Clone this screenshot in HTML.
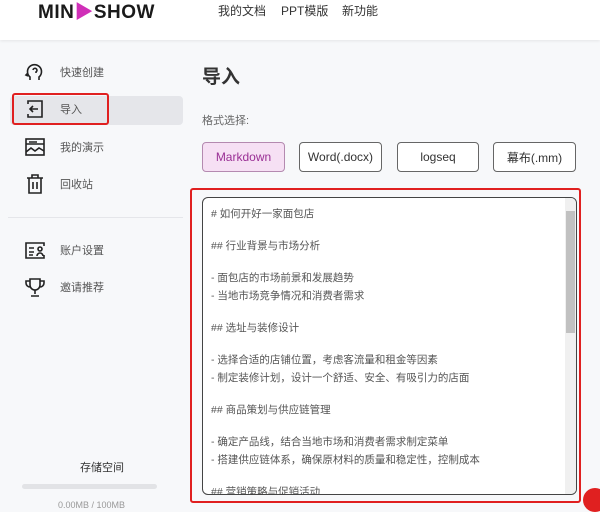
<!DOCTYPE html>
<html><head><meta charset="utf-8"><style>
*{margin:0;padding:0;box-sizing:border-box}
body{width:600px;height:506px;overflow:hidden;background:#f7f8fa;font-family:"Liberation Sans","Noto Sans CJK SC",sans-serif;position:relative;color:#333}
.hdr{position:absolute;left:0;top:0;width:600px;height:40px;background:#fff;box-shadow:0 1px 3px rgba(0,0,0,.08)}
.logo{position:absolute;left:38px;top:-3px;font-weight:bold;font-size:19px;letter-spacing:0.5px;color:#1a1a1a}
.nav{position:absolute;top:2px;font-size:12px;color:#333}
.item{position:absolute;left:24px;font-size:11px;color:#555;display:flex;align-items:center}
.item svg{width:22px;height:22px;margin-right:14px}
.btn{position:absolute;top:142px;height:30px;border:1px solid #666;border-radius:4px;background:#fff;font-size:12px;display:flex;align-items:center;justify-content:center;color:#333}
.ta{position:absolute;left:202px;top:197px;width:375px;height:298px;background:#fff;border:1.5px solid #444;border-radius:6px;overflow:hidden}
.ta p{position:absolute;left:8px;font-size:10.5px;color:#555;white-space:nowrap}
</style></head><body>
<div class="hdr">
<div class="logo">MIN<span style="color:#d02fb8">▶</span>SHOW</div>
<div class="nav" style="left:218px">我的文档</div>
<div class="nav" style="left:281px">PPT模版</div>
<div class="nav" style="left:342px">新功能</div>
</div>
<div style="position:absolute;left:10px;top:96px;width:173px;height:29px;background:#e5e6ea;border-radius:4px"></div>
<div style="position:absolute;left:12px;top:93px;width:97px;height:32px;border:2.5px solid #e02020;border-radius:3px"></div>
<div class="item" style="top:61px"><svg viewBox="0 0 22 22" fill="none" stroke="#222" stroke-width="1.6"><path d="M6 19v-3a7 7 0 1 1 9 0v3M4 12l-2 2 2 1M9 9a2 2 0 1 1 3 2v1"/></svg>快速创建</div>
<div class="item" style="top:98px"><svg viewBox="0 0 22 22" fill="none" stroke="#222" stroke-width="1.6"><path d="M4 6V3h14v16H4v-3M14 11H6M9 8l-3 3 3 3"/></svg>导入</div>
<div class="item" style="top:136px"><svg viewBox="0 0 22 22" fill="none" stroke="#222" stroke-width="1.6"><rect x="2" y="3" width="18" height="16"/><path d="M2 8h18M5 6h8M2 16l5-4 4 3 4-3 5 3"/></svg>我的演示</div>
<div class="item" style="top:173px"><svg viewBox="0 0 22 22" fill="none" stroke="#222" stroke-width="1.6"><path d="M3 5h16M8 5V2h6v3M5 5v15h12V5M9 9v7M13 9v7"/></svg>回收站</div>
<div style="position:absolute;left:8px;top:217px;width:175px;height:1px;background:#e5e6ea"></div>
<div class="item" style="top:239px"><svg viewBox="0 0 22 22" fill="none" stroke="#222" stroke-width="1.6"><path d="M20 7V4H2v15h18v-3M5 9h5M5 13h5M5 16h4M13 17a3 3 0 0 1 6 0M16 8a2 2 0 1 1 0 4 2 2 0 0 1 0-4"/></svg>账户设置</div>
<div class="item" style="top:276px"><svg viewBox="0 0 22 22" fill="none" stroke="#222" stroke-width="1.6"><path d="M6 3h10v6a5 5 0 0 1-10 0zM6 5H2v2a4 4 0 0 0 4 4M16 5h4v2a4 4 0 0 1-4 4M11 14v4M7 20h8"/></svg>邀请推荐</div>
<div style="position:absolute;left:80px;top:459px;font-size:11px;color:#333">存储空间</div>
<div style="position:absolute;left:22px;top:484px;width:135px;height:5px;background:#e2e3e6;border-radius:3px"></div>
<div style="position:absolute;left:58px;top:500px;font-size:9px;color:#999">0.00MB / 100MB</div>
<div style="position:absolute;left:202px;top:62px;font-size:19px;font-weight:bold;color:#333">导入</div>
<div style="position:absolute;left:202px;top:112px;font-size:11px;color:#666">格式选择:</div>
<div class="btn" style="left:202px;width:83px;background:#f6e0f4;border-color:#b48ab0;color:#9a2f95">Markdown</div>
<div class="btn" style="left:299px;width:83px">Word(.docx)</div>
<div class="btn" style="left:397px;width:82px">logseq</div>
<div class="btn" style="left:493px;width:83px">幕布(.mm)</div>
<div class="ta">
<p style="top:8px"># 如何开好一家面包店</p>
<p style="top:40px">## 行业背景与市场分析</p>
<p style="top:72px">- 面包店的市场前景和发展趋势</p>
<p style="top:90px">- 当地市场竞争情况和消费者需求</p>
<p style="top:122px">## 选址与装修设计</p>
<p style="top:154px">- 选择合适的店铺位置，考虑客流量和租金等因素</p>
<p style="top:172px">- 制定装修计划，设计一个舒适、安全、有吸引力的店面</p>
<p style="top:204px">## 商品策划与供应链管理</p>
<p style="top:236px">- 确定产品线，结合当地市场和消费者需求制定菜单</p>
<p style="top:254px">- 搭建供应链体系，确保原材料的质量和稳定性，控制成本</p>
<p style="top:286px">## 营销策略与促销活动</p>
<div style="position:absolute;right:0;top:0;width:11px;height:100%;background:#f0f0f0"></div>
<div style="position:absolute;right:1px;top:13px;width:9px;height:122px;background:#c1c1c1"></div>
</div>
<div style="position:absolute;left:190px;top:188px;width:391px;height:315px;border:2.5px solid #e02020;border-radius:3px"></div>
<div style="position:absolute;left:583px;top:488px;width:24px;height:24px;border-radius:50%;background:#e02020"></div>
</body></html>
